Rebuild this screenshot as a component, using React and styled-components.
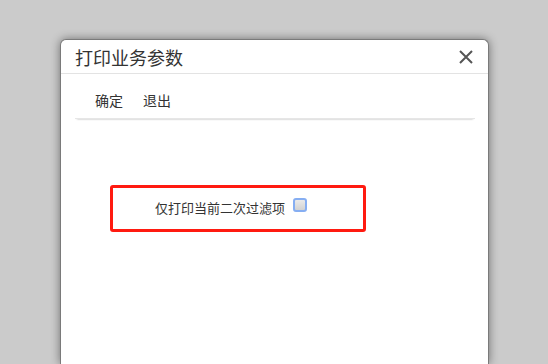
import styled, { createGlobalStyle } from "styled-components";

const GlobalStyle = createGlobalStyle`
  html, body {
    margin: 0;
    padding: 0;
    background: #cbcbcb;
    overflow: hidden;
    font-family: "Noto Sans CJK SC", "Liberation Sans", sans-serif;
  }
`;

const Page = styled.div`
  width: 548px;
  height: 364px;
  padding: 39px 0 0 60px;
  box-sizing: border-box;
`;

const Dialog = styled.div`
  width: 429px;
  height: 325px;
  box-sizing: border-box;
  background: #fff;
  border: 1px solid #7a7a7a;
  border-bottom: 0;
  border-radius: 6px 6px 0 0;
  box-shadow: 0 0 10px rgba(0, 0, 0, 0.45);
`;

const Header = styled.div`
  height: 33px;
  display: flex;
  align-items: center;
  justify-content: space-between;
  padding: 0 14px 0 14px;
  border-bottom: 1px solid #e3e3e3;
`;

const Title = styled.h1`
  margin: 0;
  font-size: 18px;
  font-weight: normal;
  color: #333;
  line-height: 1;
`;

const Close = styled.button`
  border: 0;
  background: none;
  padding: 0;
  width: 16px;
  height: 16px;
  display: flex;
  cursor: pointer;
`;

const Toolbar = styled.div`
  margin: 0 13px 0 14px;
  height: 45px;
  display: flex;
  align-items: center;
  gap: 20px;
  padding: 8px 0 0 20px;
  box-sizing: border-box;
  border-bottom: 1px solid #e6e6e6;
  box-shadow: 0 2px 2px -2px rgba(0, 0, 0, 0.35);
`;

const ToolButton = styled.span`
  font-size: 14px;
  color: #333;
  cursor: pointer;
`;

const Body = styled.div`
  padding: 66px 0 0 49px;
`;

const Highlight = styled.div`
  width: 256px;
  height: 47px;
  box-sizing: border-box;
  border: 3px solid #ff1a10;
  border-radius: 3px;
  display: flex;
  align-items: center;
  padding: 0 0 2px 42px;
`;

const Label = styled.label`
  font-size: 13px;
  color: #333;
  display: flex;
  align-items: center;
  gap: 8px;
`;

const Box = styled.span`
  width: 14px;
  height: 14px;
  box-sizing: border-box;
  border: 2px solid #86aef2;
  border-radius: 3px;
  background: linear-gradient(#eaeaea, #d2d2d2);
  margin-top: -5px;
`;

export default function App() {
  return (
    <Page>
      <GlobalStyle />
      <Dialog>
        <Header>
          <Title>打印业务参数</Title>
          <Close aria-label="关闭">
            <svg width="16" height="16" viewBox="0 0 16 16">
              <path d="M2 2 L14 14 M14 2 L2 14" stroke="#555" strokeWidth="2" />
            </svg>
          </Close>
        </Header>
        <Toolbar>
          <ToolButton>确定</ToolButton>
          <ToolButton>退出</ToolButton>
        </Toolbar>
        <Body>
          <Highlight>
            <Label>
              仅打印当前二次过滤项
              <Box />
            </Label>
          </Highlight>
        </Body>
      </Dialog>
    </Page>
  );
}
